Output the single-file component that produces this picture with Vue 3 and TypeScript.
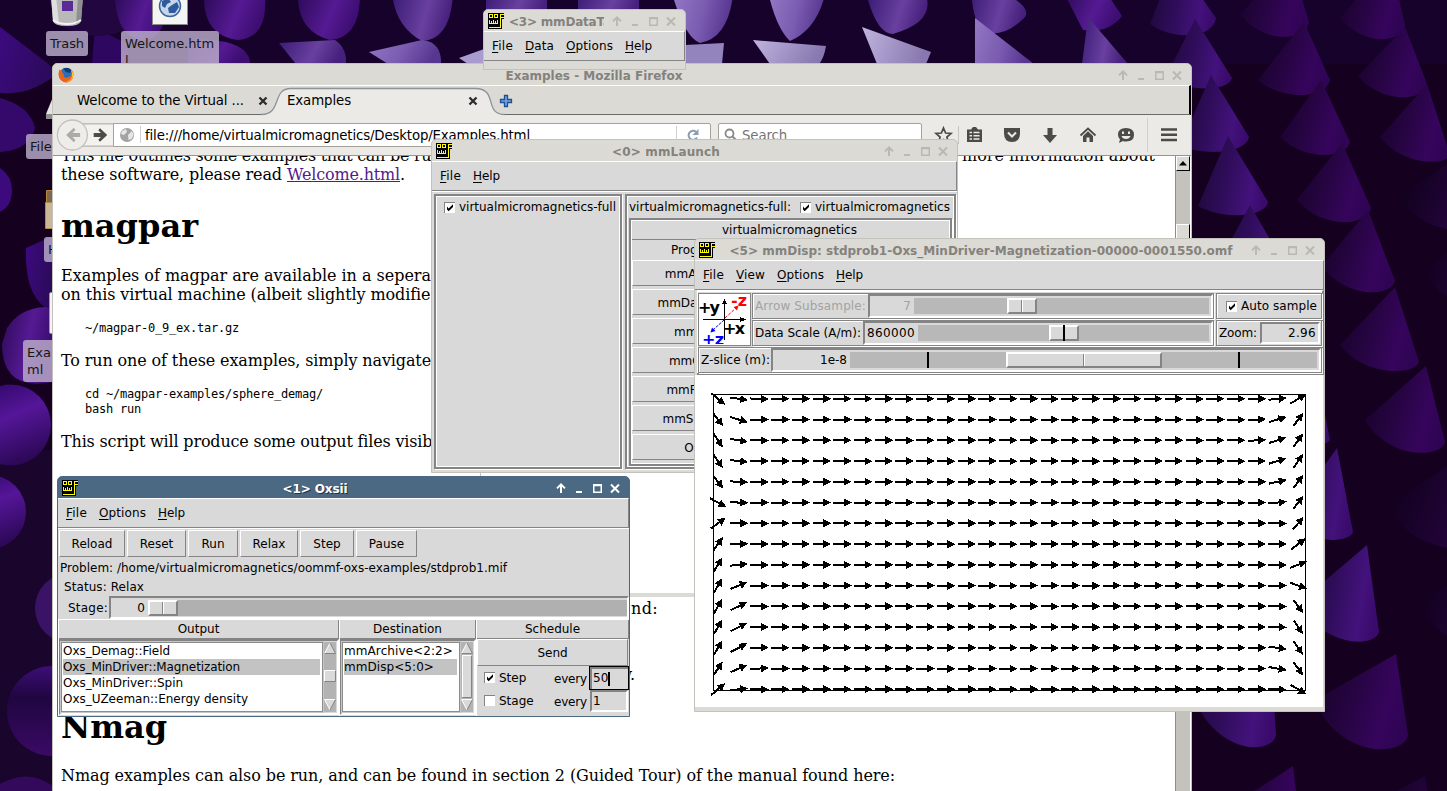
<script setup lang="ts">
interface Cone { d: string; fill: string }
interface Arrow { x: number; y: number; a: number; l: number }

/** Spreads a label over the advance width that the desktop's hinted font gives it. */
const vFit = {
  mounted(el: HTMLElement, binding: { value: number }) {
    const n = (el.textContent ?? '').length
    const w = el.getBoundingClientRect().width
    if (n > 0 && w > 0) el.style.letterSpacing = `${(binding.value - w) / n}px`
  },
}

/* apex x, apex y, base right x/y, base left x/y, bottom y, gradient id */
type C = [number, number, number, number, number, number, number, string]
const coneData: C[] = [
  [1175, -40, 1216, 18, 1150, 24, 40, 'm'],
  [1195, 19, 1232, 78, 1165, 78, 92, 'm'],
  [1211, 75, 1249, 137, 1180, 146, 155, 'm'],
  [1228, 136, 1268, 202, 1198, 206, 219, 'm'],
  [1250, 205, 1288, 270, 1215, 270, 290, 'm'],
  [1290, -40, 1309, 22, 1240, 14, 43, 'd'],
  [1304, 22, 1330, 80, 1258, 80, 100, 'd'],
  [1321, 80, 1350, 142, 1280, 137, 160, 'd'],
  [1342, 143, 1371, 208, 1297, 200, 228, 'd'],
  [1368, 210, 1395, 281, 1322, 266, 298, 'd'],
  [1395, 287, 1419, 362, 1340, 345, 376, 'd'],
  [1426, 366, 1445, 442, 1365, 420, 459, 'd'],
  [1390, -40, 1405, 25, 1340, 18, 45, 'd'],
  [1405, 27, 1427, 84, 1358, 76, 103, 'd'],
  [1427, 84, 1450, 155, 1380, 137, 166, 'd'],
  [1452, 160, 1480, 220, 1400, 196, 236, 'k'],
  [1475, 230, 1490, 290, 1424, 272, 310, 'k'],
  [1322, 400, 1330, 440, 1290, 440, 446, 'm'],
  [1337, 448, 1353, 532, 1285, 520, 544, 'm'],
  [1367, 545, 1379, 632, 1300, 602, 648, 'm'],
  [1396, 654, 1408, 735, 1315, 700, 758, 'd'],
  [1472, 450, 1490, 540, 1388, 505, 556, 'k'],
  [1490, 560, 1500, 650, 1418, 603, 650, 'k'],
  [1270, 640, 1276, 735, 1190, 688, 756, 'm'],
  [1293, 766, 1303, 850, 1225, 810, 870, 'd'],
  [1425, 776, 1435, 850, 1360, 810, 870, 'k'],
]
const cones: Cone[] = coneData.map(([ax, ay, rx, ry, lx, ly, by, g]) => ({
  d: `M${ax} ${ay} L${rx} ${ry} C${rx - 4} ${by} ${lx + 22} ${by} ${lx} ${ly} Z`,
  fill: `url(#g-${g})`,
}))

/* Blobs of the wallpaper's near rows */
const blobs: Cone[] = [
  { d: 'M95 28 L128 44 L128 63 L92 63 Z', fill: '#2e0860' },
  { d: 'M48 -5 H125 V30 Q90 45 55 22 Z', fill: '#22063f' },
  { d: 'M118 -5 H167 Q168 42 140 40 Q118 36 115 0 Z', fill: 'url(#g-b)' },
  { d: 'M205 -5 H265 Q268 38 238 40 Q205 36 204 0 Z', fill: 'url(#g-b)' },
  { d: 'M298 -5 H360 Q360 38 330 40 Q300 32 298 0 Z', fill: 'url(#g-b)' },
  { d: 'M393 -5 H453 Q450 40 422 41 Q398 28 393 0 Z', fill: 'url(#g-c)' },
  { d: 'M486 -5 H547 V20 H486 Z', fill: 'url(#g-c)' },
  { d: 'M578 -5 H639 V20 H578 Z', fill: 'url(#g-c)' },
  { d: 'M674 -5 H733 Q728 38 700 43 Q686 38 674 0 Z', fill: 'url(#g-l)' },
  { d: 'M770 -5 H825 Q816 30 790 41 Q778 30 770 0 Z', fill: 'url(#g-l)' },
  { d: 'M868 -5 H926 Q935 22 893 34 Q878 34 868 0 Z', fill: 'url(#g-c)' },
  { d: 'M970 -5 H1008 Q1035 10 1022 20 Q1005 36 987 33 Q975 28 972 0 Z', fill: 'url(#g-c)' },
  { d: 'M1065 -5 H1108 L1122 16 Q1108 34 1083 30 Z', fill: 'url(#g-b)' },
  { d: 'M188 40 Q206 38 226 42 Q250 48 250 64 H188 Z', fill: 'url(#g-b)' },
  { d: 'M279 43 L335 40 Q347 48 346 64 H296 Z', fill: 'url(#g-c)' },
  { d: 'M369 52 L422 40 Q442 42 441 64 H388 Z', fill: 'url(#g-l)' },
  { d: 'M459 58 L484 49 V64 H468 Z', fill: '#a99bd0' },
  { d: 'M685 45 L724 43 L722 64 H685 Z', fill: '#9484bd' },
  { d: 'M753 40 L826 46 Q824 58 819 64 H770 Z', fill: 'url(#g-w)' },
  { d: 'M862 27 L931 52 L926 64 H877 Z', fill: 'url(#g-w)' },
  { d: 'M975 18 L1034 64 H975 Z', fill: 'url(#g-l)' },
  { d: 'M1088 17 L1128 64 H1082 Z', fill: 'url(#g-c)' },
  { d: 'M0 27 L46 62 Q58 72 52 78 Q26 96 0 93 Z', fill: 'url(#g-e)' },
  { d: 'M0 98 Q30 106 35 128 Q30 150 0 152 Z', fill: '#35096c' },
  { d: 'M0 168 Q12 176 12 190 Q12 206 0 212 Z', fill: '#3c0a7c' },
  { d: 'M26 248 L53 236 V312 Q24 300 26 248 Z', fill: 'url(#g-e)' },
  { d: 'M7 328 Q20 308 45 307 L53 309 V382 Q2 392 2 344 Z', fill: 'url(#g-b)' },
  { d: 'M-30 425a40.5 40.5 0 1 0 81 0a40.5 40.5 0 1 0 -81 0z', fill: 'url(#g-f)' },
  { d: 'M-48 512a37 37 0 1 0 74 0a37 37 0 1 0 -74 0z', fill: 'url(#g-f)' },
  { d: 'M35 608a35 35 0 1 0 70 0a35 35 0 1 0 -70 0z', fill: '#3a1366' },
  { d: 'M7 711a45 45 0 1 0 90 0a45 45 0 1 0 -90 0z', fill: 'url(#g-g)' },
  { d: 'M0 784Q28 768 53 786V800H0z', fill: '#33095c' },
]

/* In-plane magnetisation angle of each sampled cell, degrees clockwise */
const COLS = 29
const ROWS = 15
const edge: Record<number, number[]> = {
  0: [40, 52, 56, 56, 52, 28, -36, -54, -58, -60, -60, -60, -60, -56, -40],
  1: [8, 17, 10, 7, 3, 2, 0, -2, -6, -22, -26, -27, -28, -24, -6],
  2: [2, 0, 0, 0, 0, 0, 0, 0, 0, 0, 0, 0, -4, -4, 0],
  26: [0, -3, -4, 0, 0, 0, 0, 0, 0, 0, 0, 0, 0, 0, 0],
  27: [-6, -17, -18, -17, -12, -6, 0, 0, 0, 0, 0, 2, 8, 10, 4],
  28: [-32, -54, -55, -55, -53, -52, -50, -38, -20, 20, 54, 56, 56, 54, 30],
}
const arrows: Arrow[] = []
for (let r = 0; r < ROWS; r++) {
  for (let c = 0; c < COLS; c++) {
    const a = edge[c]?.[r] ?? 0
    arrows.push({ x: 23 + 20.72 * c, y: 23.8 + 20.75 * r, a, l: Math.abs(a) > 45 ? 8 : 9 })
  }
}

const programs = ['mmArchive', 'mmDataTable', 'mmDisp', 'mmGraph', 'mmProbEd', 'mmSolve2D', 'Oxsii']
const runButtons = [
  { t: 'Reload', w: 66 }, { t: 'Reset', w: 59 }, { t: 'Run', w: 50 },
  { t: 'Relax', w: 58 }, { t: 'Step', w: 54 }, { t: 'Pause', w: 61 },
]
const outputs = [
  { t: 'Oxs_Demag::Field', w: 107 },
  { t: 'Oxs_MinDriver::Magnetization', w: 177, on: true },
  { t: 'Oxs_MinDriver::Spin', w: 120 },
  { t: 'Oxs_UZeeman::Energy density', w: 185 },
]
const destinations = [
  { t: 'mmArchive<2:2>', w: 109 },
  { t: 'mmDisp<5:0>', w: 90, on: true },
]
const menus = {
  data: [['File', 21], ['Data', 29], ['Options', 47], ['Help', 27]] as [string, number][],
  launch: [['File', 21], ['Help', 27]] as [string, number][],
  disp: [['File', 21], ['View', 29], ['Options', 47], ['Help', 27]] as [string, number][],
  oxsii: [['File', 21], ['Options', 47], ['Help', 27]] as [string, number][],
}
</script>

<template>
  <div class="desk">
    <svg class="wall" width="1447" height="791" viewBox="0 0 1447 791">
      <defs>
        <linearGradient id="g-m" x1="0" y1="0.3" x2="1" y2="0.5"><stop offset="0" stop-color="#1e0838" /><stop offset="0.45" stop-color="#300d5c" /><stop offset="0.8" stop-color="#43127c" /><stop offset="1" stop-color="#3a0b6c" /></linearGradient>
        <linearGradient id="g-d" x1="0" y1="0.2" x2="1" y2="0.5"><stop offset="0" stop-color="#17022a" /><stop offset="0.4" stop-color="#25043f" /><stop offset="0.8" stop-color="#35055c" /><stop offset="1" stop-color="#300455" /></linearGradient>
        <linearGradient id="g-k" x1="0" y1="0" x2="1" y2="0.4"><stop offset="0" stop-color="#0d0016" /><stop offset="0.6" stop-color="#1c0330" /><stop offset="1" stop-color="#270440" /></linearGradient>
        <linearGradient id="g-b" x1="0" y1="0" x2="1" y2="0.3"><stop offset="0" stop-color="#2c0a58" /><stop offset="0.6" stop-color="#551a93" /><stop offset="1" stop-color="#3d0d72" /></linearGradient>
        <linearGradient id="g-c" x1="0" y1="0" x2="1" y2="0.2"><stop offset="0" stop-color="#3a1b74" /><stop offset="0.6" stop-color="#69409f" /><stop offset="1" stop-color="#46207c" /></linearGradient>
        <linearGradient id="g-l" x1="0" y1="0" x2="1" y2="0.2"><stop offset="0" stop-color="#9278c4" /><stop offset="0.55" stop-color="#7a5bb0" /><stop offset="1" stop-color="#573590" /></linearGradient>
        <linearGradient id="g-w" x1="0" y1="0" x2="1" y2="0.2"><stop offset="0" stop-color="#c0b4de" /><stop offset="1" stop-color="#8878b0" /></linearGradient>
        <linearGradient id="g-e" x1="0" y1="0" x2="1" y2="0.4"><stop offset="0" stop-color="#3d0a80" /><stop offset="1" stop-color="#2c0a5c" /></linearGradient>
        <linearGradient id="g-f" x1="0.3" y1="0" x2="0.7" y2="1"><stop offset="0" stop-color="#32086c" /><stop offset="0.4" stop-color="#551699" /><stop offset="1" stop-color="#280750" /></linearGradient>
        <linearGradient id="g-g" x1="0" y1="0" x2="0" y2="1"><stop offset="0" stop-color="#3e0d78" /><stop offset="0.35" stop-color="#1f0640" /><stop offset="1" stop-color="#3b0a66" /></linearGradient>
        <symbol id="oof" viewBox="0 0 16 16">
          <path d="M0 0h16v6h-2v10H0z" fill="#000" />
          <g shape-rendering="crispEdges" fill="none" stroke="#ff0">
            <path d="M1.5 1.5h3v3h-3zM6.5 1.5h3v3h-3z" />
            <path d="M15.5 1.5h-3v13H1M12.5 4.5h3" />
            <path d="M1.5 7v3.5h8V7M3.5 8v2M5.5 7v3M7.5 8v2" />
          </g>
        </symbol>
        <symbol id="ctl" viewBox="0 0 72 12">
          <path d="M9 11V3M5 6.4L9 2.4l4 4" fill="none" stroke="currentColor" stroke-width="2" />
          <path d="M24 9h6v2h-6z" fill="currentColor" />
          <path d="M41 2h9v9h-9zm1.5 2.2v5.3h6V4.2z" fill="currentColor" fill-rule="evenodd" />
          <path d="M59 2.5l8 8m0-8l-8 8" fill="none" stroke="currentColor" stroke-width="2" />
        </symbol>
        <symbol id="tick" viewBox="0 0 11 11">
          <path d="M0 0h11v11H0z" fill="#fff" />
          <path d="M0 11V0h11" fill="none" stroke="#848484" stroke-width="2" />
          <path d="M3 4.5v3l1.7 1.7L9 5V2.2L4.7 6.5z" fill="#000" />
        </symbol>
        <symbol id="untick" viewBox="0 0 11 11">
          <path d="M0 0h11v11H0z" fill="#fff" />
          <path d="M0 11V0h11" fill="none" stroke="#848484" stroke-width="2" />
        </symbol>
      </defs>
      <rect width="1447" height="791" fill="#15001f" />
      <rect width="1447" height="64" fill="#16022b" />
      <rect y="450" width="53" height="341" fill="#1a052c" />
      <path v-for="(b, i) in blobs" :key="'b' + i" :d="b.d" :fill="b.fill" />
      <path v-for="(c, i) in cones" :key="'c' + i" :d="c.d" :fill="c.fill" />
    </svg>

    <div class="dicon i-trash">
      <svg width="36" height="27" viewBox="0 0 36 27">
        <path d="M2 -4h32l-2 25q-1 5-14 5T4 21z" fill="#b9b9b9" />
        <path d="M2 -4h5l3 28q-5-1-6-3z" fill="#dedede" />
        <path d="M29 -4h5l-2 25q-2 2-5 3z" fill="#8f8f8f" />
        <path d="M13 1h11v10H13z" fill="#5b2a96" />
        <path d="M4 20q6 4 14 4t14-4" fill="none" stroke="#f2f2f2" stroke-width="2" />
      </svg>
      <span class="lbl"><span v-fit="34">Trash</span></span>
    </div>
    <div class="dicon i-welcome">
      <svg width="36" height="25" viewBox="0 0 36 25">
        <path d="M0 -6h36v31H0z" fill="#8a8a8a" /><path d="M1 -6h34v30H1z" fill="#f4f4f2" />
        <circle cx="18" cy="6" r="10.5" fill="#c5d6ea" stroke="#3b62a0" stroke-width="1.5" />
        <path d="M10 1l6-3 3 4-4 2-2 4-3-2zM20 5l5-3 2 5-4 6-6 0-1-5z" fill="#2f5b9c" />
      </svg>
      <span class="lbl two"><span v-fit="89">Welcome.htm</span><br />l</span>
    </div>
    <div class="dicon i-fs"><span class="lbl">File</span></div>
    <svg class="drive" width="10" height="26" viewBox="0 0 10 26"><path d="M8 2L1 19v5h9V2z" fill="#e4e4e2" /><path d="M1 19h9v5H1z" fill="#8e8e8c" /></svg>
    <svg class="folder" width="10" height="40" viewBox="0 0 10 40"><path d="M1.5 0.5H10v12H1.5z" fill="#7d684c" stroke="#b98b3c" /><path d="M0.5 12.5H10v26H0.5z" fill="#c9b795" stroke="#b98b3c" /></svg>
    <div class="dicon i-home"><span class="lbl">H</span></div>
    <div class="paper"></div>
    <div class="dicon i-exa"><span class="lbl">Exa<br />ml</span></div>

    <!-- Firefox -->
    <section class="win firefox">
      <header class="title">
        <svg class="fx" width="16" height="16" viewBox="0 0 16 16">
          <circle cx="8" cy="8" r="7" fill="#2a6fb8" />
          <path d="M5 1.5q5-2 8.5 1.5L12 6 8 5z" fill="#123a75" />
          <path d="M1.5 2.5q-2 5 0 8.5 3 5 8 4.4 6-1.4 6-8.4 0-3-2.5-4.5 1.5 4-0.5 6.5-2.5 2.6-5.5 1.5Q4.5 9.5 6 7.5 3.5 6 4 3.5 2.5 3.5 1.5 2.5z" fill="#e8641b" />
          <path d="M13 3q3 3 2 7-2 5-7 5 5-1.5 6-5.5 0.6-3-1-6.5z" fill="#ffc52b" />
        </svg>
        <div class="cap"><span v-fit="177">Examples - Mozilla Firefox</span></div>
        <svg class="ctl" width="72" height="12"><use href="#ctl" /></svg>
      </header>
      <div class="tabs">
        <svg class="tabline" width="1137" height="30" viewBox="0 0 1137 30">
          <path d="M0 28.5H208C230 28.5 218 2.5 238 2.5H422C446 2.5 430 28.5 452 28.5H1137V30H0z" fill="#ebeae6" />
          <path d="M0 28.5H208" stroke="#6b6b66" fill="none" /><path d="M450 28.5H1137" stroke="#6b6b66" fill="none" />
          <path d="M208 28.5C230 28.5 218 2.5 238 2.5H422C446 2.5 430 28.5 452 28.5" fill="none" stroke="#8a949b" stroke-width="1.3" />
        </svg>
        <span class="tab t1"><span v-fit="167">Welcome to the Virtual ...</span></span>
        <svg class="x" width="10" height="10" viewBox="0 0 10 10"><path d="M1.5 1.5l7 7m0-7l-7 7" stroke="#2c2c2c" stroke-width="2.3" /></svg>
        <span class="tab t2"><span v-fit="64">Examples</span></span>
        <svg class="x" width="10" height="10" viewBox="0 0 10 10"><path d="M1.5 1.5l7 7m0-7l-7 7" stroke="#2c2c2c" stroke-width="2.3" /></svg>
        <svg class="plus" width="14" height="14" viewBox="0 0 14 14"><path d="M5.5 1.5h3v4h4v3h-4v4h-3v-4h-4v-3h4z" fill="#73a3dc" stroke="#1f4f94" stroke-width="1.3" /></svg>
      </div>
      <div class="nav">
        <svg class="bf" width="62" height="34" viewBox="0 0 62 34">
          <path d="M30 5.5H62V29H30z" fill="#f3f2ef" /><path d="M28 5.5H62M28 28.5H62" stroke="#a5a299" />
          <circle cx="19" cy="17" r="15.5" fill="#eeedea" stroke="#c2c0ba" stroke-width="1.3" />
          <path d="M12.5 17l8-7.5 1.7 2.3-3.2 3.2h8v4h-8l3.200 3.200-1.700 2.300z" fill="#adaba6" />
          <path d="M55 17l-7.500-7-1.700 2.200 2.700 2.800h-7.500v4h7.500l-2.700 2.800 1.700 2.200z" fill="#4c4b48" />
        </svg>
        <div class="url">
          <svg width="16" height="16" viewBox="0 0 16 16"><circle cx="8" cy="8" r="7" fill="#a3a3a3" /><path d="M3 4l4-2 1 3-3 3-3-1zM9 8l4-4 1.5 4-2 4-3 1z" fill="#e6e6e6" /></svg>
          <i class="sep"></i>
          <span class="addr"><span v-fit="385">file:///home/virtualmicromagnetics/Desktop/Examples.html</span></span>
          <i class="sep"></i>
          <svg class="rl" width="12" height="12" viewBox="0 0 12 12"><path d="M10 8.5A4.5 4.5 0 1 1 9 2.8" fill="none" stroke="#8d9db0" stroke-width="2" /><path d="M11.5 0v6h-6z" fill="#8d9db0" /></svg>
        </div>
        <div class="search">
          <svg width="13" height="13" viewBox="0 0 13 13"><circle cx="5.5" cy="5.5" r="4" fill="none" stroke="#8a8a8a" stroke-width="1.8" /><path d="M8.5 8.5l4 4" stroke="#8a8a8a" stroke-width="2" /></svg>
          <span v-fit="45">Search</span>
        </div>
        <svg class="tools" width="260" height="40" viewBox="0 0 260 40">
          <path d="M21.5 13l2.1 5 5.4 0.4-4.1 3.6 1.3 5.3-4.7-2.9-4.7 2.9 1.3-5.3-4.1-3.6 5.4-0.4z" fill="none" stroke="#4c4b48" stroke-width="1.7" />
          <path d="M36.5 11v18" stroke="#c6c4be" />
          <path d="M45 14.5h4l2-2.5h3l2 2.5h4V27H45z" fill="#4c4b48" /><path d="M47.5 17.5h2.5m1.5 0h6M47.5 20.7h2.5m1.5 0h6M47.5 24h2.5m1.5 0h6" stroke="#ebeae6" stroke-width="1.5" />
          <path d="M82 13h16v5q0 9-8 9t-8-9z" fill="#4c4b48" /><path d="M86 17.5l4 4 4-4" fill="none" stroke="#ebeae6" stroke-width="2" />
          <path d="M125.5 13h5v7h4.5l-7 8-7-8h4.5z" fill="#4c4b48" />
          <path d="M158.5 20.5l7.5-7 7.5 7" fill="none" stroke="#4c4b48" stroke-width="1.8" /><path d="M161 21l5-4.7 5 4.7V27h-3.5v-4.5h-3V27H161z" fill="#4c4b48" />
          <path d="M204 13q8 0 8 6.7T204 26.5q-2 0-3-0.5l-4 2 1-3.5q-2-2-2-4.8Q196 13 204 13z" fill="#4c4b48" /><path d="M201 16.5v2.5m6-2.5v2.5" stroke="#ebeae6" stroke-width="2" /><path d="M199.5 21h9q-1 3-4.5 3T199.5 21z" fill="#ebeae6" />
          <path d="M225.5 3v34" stroke="#d2d0ca" />
          <path d="M239 14.5h16M239 19.8h16M239 25h16" stroke="#4c4b48" stroke-width="2.6" />
        </svg>
      </div>
      <div class="view">
        <div class="page">
          <p class="split"><span><span v-fit="380">This file outlines some examples that can be run</span></span><span v-fit="193">more information about</span></p>
          <p><span v-fit="226">these software, please read&nbsp;</span><a v-fit="113">Welcome.html</a>.</p>
          <h1 class="h-mag"><span v-fit="137">magpar</span></h1>
          <p class="s21"><span v-fit="370">Examples of magpar are available in a sepera</span></p>
          <p><span v-fit="369">on this virtual machine (albeit slightly modifie</span></p>
          <pre><span v-fit="154">~/magpar-0_9_ex.tar.gz</span></pre>
          <p class="s15"><span v-fit="370">To run one of these examples, simply navigate</span></p>
          <pre><span v-fit="238">cd ~/magpar-examples/sphere_demag/</span><br /><span v-fit="56">bash run</span></pre>
          <p class="s15"><span v-fit="371">This script will produce some output files visib</span></p>
          <p class="tail-a"><span v-fit="27">nd:</span></p>
          <p class="tail-b">y.</p>
          <h1 class="h-nmag"><span v-fit="106">Nmag</span></h1>
          <p class="s20"><span v-fit="834">Nmag examples can also be run, and can be found in section 2 (Guided Tour) of the manual found here:</span></p>
        </div>
        <div class="vbar">
          <div class="up"><svg width="8" height="5" viewBox="0 0 8 5"><path d="M4 0l4 4.5H0z" fill="#000" /></svg></div>
          <div class="gap"></div>
          <div class="thumb"></div>
        </div>
      </div>
    </section>

    <section class="ghost"></section>

    <!-- mmLaunch -->
    <section class="win launch">
      <header class="title">
        <svg class="oof" width="16" height="16"><use href="#oof" /></svg>
        <div class="cap"><span v-fit="108">&lt;0&gt; mmLaunch</span></div>
        <svg class="ctl" width="72" height="12"><use href="#ctl" /></svg>
      </header>
      <nav class="menu"><span v-for="m in menus.launch" :key="m[0]" v-fit="m[1]"><u>{{ m[0][0] }}</u>{{ m[0].slice(1) }}</span></nav>
      <div class="lbody">
        <div class="groove hosts">
          <svg width="11" height="11"><use href="#tick" /></svg>
          <span v-fit="157">virtualmicromagnetics-full</span>
        </div>
        <div class="groove accts">
          <div class="acct">
            <span v-fit="162">virtualmicromagnetics-full:</span>
            <svg width="11" height="11"><use href="#tick" /></svg>
            <span v-fit="135">virtualmicromagnetics</span>
          </div>
          <div class="groove progs">
            <div class="who"><span v-fit="135">virtualmicromagnetics</span></div>
            <div class="ph">Programs</div>
            <div v-for="p in programs" :key="p" class="btn prog">{{ p }}</div>
          </div>
        </div>
      </div>
    </section>

    <!-- mmDisp -->
    <section class="win disp">
      <header class="title">
        <svg class="oof" width="16" height="16"><use href="#oof" /></svg>
        <div class="cap"><span v-fit="503">&lt;5&gt; mmDisp: stdprob1-Oxs_MinDriver-Magnetization-00000-0001550.omf</span></div>
        <svg class="ctl" width="72" height="12"><use href="#ctl" /></svg>
      </header>
      <nav class="menu"><span v-for="m in menus.disp" :key="m[0]" v-fit="m[1]"><u>{{ m[0][0] }}</u>{{ m[0].slice(1) }}</span></nav>
      <div class="panel">
        <div class="axes">
          <svg width="50" height="50" viewBox="0 0 50 50">
            <g shape-rendering="crispEdges">
              <path d="M25.5 46V8M4 25.5H44" stroke="#000" /><path d="M25.5 4.5l2.5 5.5h-5zM47 25.5l-6-2.5v5z" fill="#000" />
            </g>
            <path d="M26 24L37 14" stroke="red" stroke-dasharray="3 1.5" /><path d="M39.5 11.5l-1.5 5-3.5-3.5z" fill="red" />
            <path d="M25 26L14 36" stroke="#00f" stroke-dasharray="3 1" /><path d="M11.5 38.5l1.5-5 3.5 3.5z" fill="#00f" />
            <text class="ax" x="-1" y="19" textLength="22">+y</text>
            <text class="ax" x="24" y="40" textLength="22">+x</text>
            <text class="ax" x="32" y="12" fill="red" textLength="16">-z</text>
            <text class="ax" x="3" y="50.5" fill="#00f" textLength="22">+z</text>
          </svg>
        </div>
        <div class="mids">
          <div class="srow">
            <span class="sl dim"><span v-fit="111">Arrow Subsample:</span></span>
            <div class="scale"><span class="val v1 dim">7</span><div class="trough"><div class="knob k1"><i></i></div></div></div>
          </div>
          <div class="srow">
            <span class="sl"><span v-fit="106">Data Scale (A/m):</span></span>
            <div class="scale"><span class="val v2"><span v-fit="48">860000</span></span><div class="trough"><div class="knob k2"><i class="blk"></i></div></div></div>
          </div>
        </div>
        <div class="rights">
          <div class="srow auto"><svg width="11" height="11"><use href="#tick" /></svg><span v-fit="76">Auto sample</span></div>
          <div class="srow zoom"><span v-fit="38">Zoom:</span><div class="entry"><span v-fit="28">2.96</span></div></div>
        </div>
        <div class="srow zrow">
          <span class="sl"><span v-fit="69">Z-slice (m):</span></span>
          <div class="scale"><span class="val v3"><span v-fit="27">1e-8</span></span><div class="trough"><b class="mark m1"></b><b class="mark m2"></b><div class="knob k3"><i></i></div></div></div>
        </div>
      </div>
      <svg class="field" width="628" height="332" viewBox="0 0 628 332">
        <rect x="18.5" y="19.5" width="592" height="296" fill="none" stroke="#000" shape-rendering="crispEdges" />
        <g shape-rendering="crispEdges">
          <path
            v-for="(a, i) in arrows" :key="i" class="arw"
            :transform="`translate(${a.x} ${a.y}) rotate(${a.a})`"
            :d="`M${-a.l} -1H${a.l - 7.5}V-4L${a.l + 0.5} 0L${a.l - 7.5} 4V1H${-a.l}z`"
          />
        </g>
      </svg>
    </section>

    <!-- mmDataTable -->
    <section class="win data">
      <header class="title">
        <svg class="oof" width="16" height="16"><use href="#oof" /></svg>
        <div class="cap clip"><span v-fit="122">&lt;3&gt; mmDataTable</span></div>
        <svg class="ctl" width="72" height="12"><use href="#ctl" /></svg>
      </header>
      <nav class="menu"><span v-for="m in menus.data" :key="m[0]" v-fit="m[1]"><u>{{ m[0][0] }}</u>{{ m[0].slice(1) }}</span></nav>
    </section>

    <!-- Oxsii -->
    <section class="win oxsii">
      <header class="title">
        <svg class="oof" width="16" height="16"><use href="#oof" /></svg>
        <div class="cap"><span v-fit="65">&lt;1&gt; Oxsii</span></div>
        <svg class="ctl" width="72" height="12"><use href="#ctl" /></svg>
      </header>
      <nav class="menu"><span v-for="m in menus.oxsii" :key="m[0]" v-fit="m[1]"><u>{{ m[0][0] }}</u>{{ m[0].slice(1) }}</span></nav>
      <div class="obody">
        <div class="runs"><div v-for="b in runButtons" :key="b.t" class="btn" :style="{ width: b.w + 'px' }">{{ b.t }}</div></div>
        <div class="line prob"><span v-fit="447">Problem: /home/virtualmicromagnetics/oommf-oxs-examples/stdprob1.mif</span></div>
        <div class="line stat"><span v-fit="80">Status: Relax</span></div>
        <div class="stage">
          <span class="stl"><span v-fit="40">Stage:</span></span>
          <div class="scale"><span class="val v4">0</span><div class="trough"><div class="knob"><i></i></div></div></div>
        </div>
        <div class="cols">
          <div class="col c-out">
            <div class="hd">Output</div>
            <div class="lists">
              <div class="lb"><div v-for="o in outputs" :key="o.t" :class="{ on: o.on }"><span v-fit="o.w">{{ o.t }}</span></div></div>
              <svg width="12" height="70" viewBox="0 0 12 70">
                <path d="M0 0h12v70H0z" fill="#b3b3b3" /><path d="M6 1L11.5 11.5H0.5z" fill="#d9d9d9" /><path d="M6 1L0.5 11.5" stroke="#fff" /><path d="M6 1l5.5 10.5H0.5" fill="none" stroke="#848484" />
                <path d="M0.5 29h11v10H0.5z" fill="#d9d9d9" /><path d="M0.5 39V28.5H11" fill="none" stroke="#fff" /><path d="M0.5 39.5h11V29" fill="none" stroke="#848484" />
                <path d="M0.5 57.5h11L6 68z" fill="#d9d9d9" /><path d="M11.5 57.5H0.5L6 68" fill="none" stroke="#fff" /><path d="M6 68l5.5-10.5" stroke="#848484" />
              </svg>
            </div>
          </div>
          <div class="col c-dst">
            <div class="hd">Destination</div>
            <div class="lists">
              <div class="lb"><div v-for="o in destinations" :key="o.t" :class="{ on: o.on }"><span v-fit="o.w">{{ o.t }}</span></div></div>
              <svg width="12" height="70" viewBox="0 0 12 70">
                <path d="M0 0h12v70H0z" fill="#b3b3b3" /><path d="M6 1L11.5 11.5H0.5z" fill="#d9d9d9" /><path d="M6 1L0.5 11.5" stroke="#fff" /><path d="M6 1l5.5 10.5H0.5" fill="none" stroke="#848484" />
                <path d="M1.5 13h9v42h-9z" fill="#d9d9d9" /><path d="M1.5 55V13.5H10" fill="none" stroke="#fff" /><path d="M1.5 55.5h9V14" fill="none" stroke="#848484" />
                <path d="M0.5 57.5h11L6 68z" fill="#d9d9d9" /><path d="M11.5 57.5H0.5L6 68" fill="none" stroke="#fff" /><path d="M6 68l5.5-10.5" stroke="#848484" />
              </svg>
            </div>
          </div>
          <div class="col c-sch">
            <div class="hd">Schedule</div>
            <div class="btn send">Send</div>
            <div class="ev e1"><svg width="11" height="11"><use href="#tick" /></svg><span class="nm">Step</span><span v-fit="33" class="evy">every</span><div class="ent foc">50<i></i></div></div>
            <div class="ev e2"><svg width="11" height="11"><use href="#untick" /></svg><span class="nm">Stage</span><span v-fit="33" class="evy">every</span><div class="ent">1</div></div>
          </div>
        </div>
      </div>
    </section>
  </div>
</template>

<style scoped>
* { box-sizing: border-box; }
.desk { position: relative; width: 1447px; height: 791px; overflow: hidden; background: #15001f; font: 12px/16px "DejaVu Sans", sans-serif; color: #000; }
.desk span, .desk a { white-space: nowrap; }
svg { display: block; flex: none; }
.wall { position: absolute; left: 0; top: 0; }

.dicon { position: absolute; display: flex; flex-direction: column; align-items: center; font-size: 13px; line-height: 17px; color: #161616; }
.lbl { background: rgba(190, 178, 205, .8); border-radius: 3px; padding: 4px 4px; }
.lbl span { display: inline-block; }
.i-trash { left: 46px; top: 0; width: 42px; gap: 4px; }
.i-trash .lbl { height: 25px; padding: 4px; }
.i-welcome { left: 121px; top: 0; width: 98px; gap: 6px; }
.lbl.two { width: 98px; height: 46px; }
.i-fs { left: 26px; top: 134px; }
.i-fs .lbl { width: 60px; height: 25px; }
.i-home { left: 44px; top: 237px; }
.i-home .lbl { width: 40px; height: 25px; }
.i-exa { left: 23px; top: 340px; }
.i-exa .lbl { width: 60px; height: 42px; }
.drive { position: absolute; left: 45px; top: 95px; }
.folder { position: absolute; left: 45px; top: 190px; }
.paper { position: absolute; left: 49px; top: 292px; width: 10px; height: 42px; background: #f4f4f2; border: 1px solid #999; border-radius: 2px; }

.win { position: absolute; background: #dcdad5; border: 1px solid #c4c2bd; border-radius: 5px 5px 0 0; display: flex; flex-direction: column; overflow: hidden; }
.title { height: 21px; flex: none; display: flex; align-items: center; padding: 0 5px 0 4px; color: #bab8b3; }
.oof { margin-top: 1px; }
.cap { flex: 1; min-width: 0; text-align: center; font-weight: bold; color: #84827d; overflow: hidden; white-space: nowrap; padding-top: 3px; }
.cap span { display: inline-block; }
.cap.clip { text-align: left; padding-left: 5px; margin-right: 4px; }
.menu { height: 30px; flex: none; display: flex; align-items: center; gap: 12px; padding: 0 0 0 8px; background: #d9d9d9; border-top: 1px solid #fff; border-bottom: 1px solid #848484; border-right: 1px solid #848484; }
.menu > span { display: inline-block; }
.menu u { text-underline-offset: 2px; }
.btn { background: #d9d9d9; border: 1px solid; border-color: #fff #848484 #848484 #fff; text-align: center; }

.firefox { left: 52px; top: 63px; width: 1140px; height: 740px; }
.fx { margin: 1px 0 0 1px; }
.tabs { height: 30px; flex: none; position: relative; display: flex; align-items: center; border-top: 1px solid #fff; border-right: 2px solid #000; font-size: 13.33px; }
.tabline { position: absolute; left: 0; top: 0; }
.tab { position: relative; }
.tab span { display: inline-block; }
.t1 { margin-left: 24px; width: 181px; }
.x { position: relative; margin-top: 1px; }
.t2 { margin-left: 19px; width: 181px; }
.plus { position: relative; margin-left: 21px; margin-top: 1px; }
.nav { height: 41px; flex: none; background: #ebeae6; border-bottom: 1px solid #98958c; display: flex; align-items: center; padding: 0 0 0 1px; }
.bf { margin-top: -1px; width: 60px; margin-right: -1px; }
.url { width: 598px; height: 24px; margin-top: -1px; background: #fff; border: 1px solid #a5a299; display: flex; align-items: center; padding-left: 5px; font-size: 13.33px; border-radius: 0 2px 2px 0; }
.sep { width: 1px; height: 17px; background: #d0d0d0; margin-left: 5px; }
.addr { width: 535px; padding: 2px 0 0 4px; }
.url .sep + .rl { margin-left: 10px; }
.addr + .sep { margin-left: 0; }
.addr span, .search span { display: inline-block; }
.search span { padding-top: 2px; }
.search { margin: -1px 0 0 7px; width: 204px; height: 24px; background: #fff; border: 1px solid #a5a299; border-radius: 2px; display: flex; align-items: center; gap: 5px; padding-left: 5px; font-size: 13.33px; color: #757575; }
.tools { margin-left: 0; margin-top: -1px; }
.view { flex: 1; display: flex; background: #fff; overflow: hidden; min-height: 0; }
.page { width: 1122px; padding-left: 8px; margin-top: -10px; font: 16px/19px "DejaVu Serif", serif; }
.page p, .page h1, .page pre { margin: 0; white-space: nowrap; }
.page p { height: 19px; }
.page span, .page a { display: inline-block; }
.page a { color: #551a8b; text-decoration: underline; }
.page .split { display: flex; }
.split > span:first-child { width: 901px; }
.page h1 { font-size: 32px; line-height: 38px; height: 38px; }
.page .h-mag { margin-top: 23px; }
.page .s21 { margin-top: 21px; }
.page .s15 { margin-top: 15px; }
.page .s20 { margin-top: 20px; }
.page .h-nmag { margin-top: 24px; }
.page pre { font: 12px/15px "DejaVu Sans Mono", monospace; margin: 17px 0 0 24px; }
.page .tail-a { margin: 148px 0 0 570px; }
.page .tail-b { margin: 47px 0 0 562px; }
.vbar { width: 16px; flex: none; background: #c4c2bd; border-left: 1px solid #8f8d86; border-right: 1px solid #fff; display: flex; flex-direction: column; }
.up { height: 15px; flex: none; background: #dcdad5; border: 1px solid; border-color: #fff #000 #000 #fff; display: flex; align-items: center; justify-content: center; }
.gap { height: 53px; flex: none; }
.thumb { height: 300px; flex: none; background: #dcdad5; border: 1px solid; border-color: #fff #000 #000 #fff; }

.ghost { position: absolute; left: 480px; top: 440px; width: 500px; height: 157px; background: #fff; border: 1px solid #c4c2bd; border-bottom: 4px solid #dcdad5; }

.launch { left: 431px; top: 139px; width: 527px; height: 334px; }
.lbody { flex: 1; display: flex; gap: 3px; background: #d9d9d9; border-top: 1px solid #fff; padding: 2px 1px 0 2px; border-bottom: 3px solid #dcdad5; min-height: 0; }
.groove { border: 2px solid #848484; box-shadow: inset 0 0 0 1px #fff, 1px 1px 0 #fff; background: #d9d9d9; }
.hosts { width: 188px; display: flex; align-items: flex-start; gap: 4px; padding: 3px 0 0 8px; }
.hosts svg { margin-top: 3px; }
.hosts span, .acct span, .who span { display: inline-block; }
.accts { flex: 1; padding: 0 1px 1px 2px; display: flex; flex-direction: column; min-height: 0; }
.acct { height: 22px; display: flex; align-items: center; }
.acct svg { margin: 0 4px 0 9px; }
.progs { flex: 1; padding: 1px; overflow: hidden; margin-right: 1px; min-height: 0; }
.who { height: 19px; text-align: center; border-bottom: 1px solid #848484; line-height: 19px; padding-right: 2px; }
.ph { width: 135px; text-align: center; line-height: 20px; height: 20px; }
.prog { width: 134px; height: 26px; line-height: 26px; margin-bottom: 3px; }

.disp { left: 694px; top: 238px; width: 631px; height: 474px; }
.panel { background: #d9d9d9; border-top: 1px solid #fff; border-right: 2px solid #848484; border-bottom: 2px solid #848484; height: 85px; flex: none; margin-left: 2px; padding: 2px 0 0 1px; display: grid; grid-template-columns: 52px 462px 106px; column-gap: 2px; grid-template-rows: 53px 26px; row-gap: 1px; box-shadow: inset 0 0 0 1px #fff; }
.axes { width: 53px; height: 53px; border: 1px solid #848484; background: #fff; overflow: hidden; }
.ax { font: bold 16px "DejaVu Sans", sans-serif; }
.mids, .rights { display: flex; flex-direction: column; gap: 1px; }
.srow { height: 26px; border: 1px solid #848484; display: flex; align-items: center; box-shadow: 1px 1px 0 #fff, inset 1px 1px 0 #fff; }
.sl { padding: 0 2px 0 2px; }
.zrow .sl { padding-right: 1px; }
.sl span, .val span, .auto span, .zoom span, .line span, .stl span { display: inline-block; }
.dim { color: #a3a3a3; }
.scale { flex: 1; height: 24px; border: 2px solid; border-color: #848484 #fff #fff #848484; padding: 2px 2px 2px 0; display: flex; align-items: center; background: #d9d9d9; }
.val { text-align: right; padding-right: 3px; flex: none; }
.v1 { width: 44px; }
.v2 { width: 53px; padding-right: 3px; }
.v3 { width: 77px; }
.v4 { width: 37px; }
.trough { position: relative; flex: 1; height: 16px; background: #b8b8b8; }
.knob { width: 30px; height: 16px; background: #d9d9d9; border: 2px solid; border-color: #fff #848484 #848484 #fff; display: flex; justify-content: center; }
.knob i { width: 2px; height: 12px; border-left: 1px solid #848484; border-right: 1px solid #fff; }
.knob i.blk { border: 0; background: #000; height: 16px; margin-top: -2px; }
.k1 { margin-left: 93px; }
.k2 { margin-left: 131px; }
.k3 { margin-left: 156px; width: 156px; }
.mark { position: absolute; top: 0; width: 2px; height: 16px; background: #000; }
.m1 { left: 77px; }
.m2 { left: 388px; }
.zrow { grid-column: 1 / -1; }
.auto { padding-left: 9px; gap: 4px; }
.zoom { padding: 0 1px 0 2px; gap: 3px; }
.entry { flex: 1; height: 22px; border: 2px solid; border-color: #848484 #fff #fff #848484; text-align: right; padding: 1px 2px 0 0; }
.field { background: #fff; flex: none; }
.arw { fill: #000; }

.data { left: 483px; top: 9px; width: 203px; height: 61px; }

.oxsii { left: 57px; top: 476px; width: 573px; height: 241px; border-color: #4b6983; background: #4b6983; }
.oxsii .title { color: #fff; }
.oxsii .cap { color: #fff; text-shadow: 1px 1px 0 #223445; }
.obody { flex: 1; background: #d9d9d9; display: flex; flex-direction: column; border-top: 1px solid #fff; }
.runs { display: flex; gap: 2px; padding: 1px 0 0 1px; }
.runs .btn { height: 27px; line-height: 27px; flex: none; }
.line { height: 19px; line-height: 19px; }
.prob { padding-left: 2px; margin-top: 1px; line-height: 21px; }
.stat { padding-left: 6px; height: 18px; line-height: 20px; }
.stage { display: flex; height: 23px; margin-top: 1px; }
.stl { width: 51px; padding: 4px 0 0 10px; }
.stage .scale { height: 23px; padding: 2px 0 1px 0; }
.stage .trough { background: #b0b0b0; }
.cols { flex: 1; display: grid; grid-template-columns: 281px 137px 1fr; border-top: 1px solid #fff; }
.col { border-left: 1px solid #fff; }
.hd { height: 19px; line-height: 18px; text-align: center; border-bottom: 1px solid #848484; border-right: 1px solid #848484; }
.lists { display: flex; gap: 1px; border: 2px solid; border-color: #848484 #fff #fff #848484; height: 76px; padding: 1px 1px 1px 0; }
.lb { flex: 1; border: 1px solid #8c8c8c; background: #fff; padding: 0 2px 0 1px; height: 70px; outline: 1px solid #c6c6c6; outline-offset: 0; }
.lb div { height: 16px; line-height: 16px; }
.lb div span { display: inline-block; }
.lb .on { background: #c3c3c3; }
.send { height: 27px; line-height: 26px; margin-right: 1px; }
.ev { display: flex; align-items: center; height: 23px; padding-left: 7px; }
.ev > span { display: inline-block; }
.nm { width: 55px; margin: 0 0 0 4px; }
.evy { padding-top: 2px; }
.ent { width: 38px; height: 22px; margin-left: 3px; border: 2px solid; border-color: #848484 #fff #fff #848484; line-height: 19px; padding: 1px 0 0 1px; display: flex; align-items: center; flex: none; }
.ent.foc { width: 40px; height: 24px; margin-left: 2px; outline: 1px solid #000; outline-offset: -1px; border-color: #000; border-width: 1px; box-shadow: inset 1px 1px 0 1px #848484; padding: 2px 0 0 3px; }
.ent i { width: 1.5px; height: 14px; background: #000; }
</style>

<style>
html, body { margin: 0; background: #15001f; overflow: hidden; }
</style>
